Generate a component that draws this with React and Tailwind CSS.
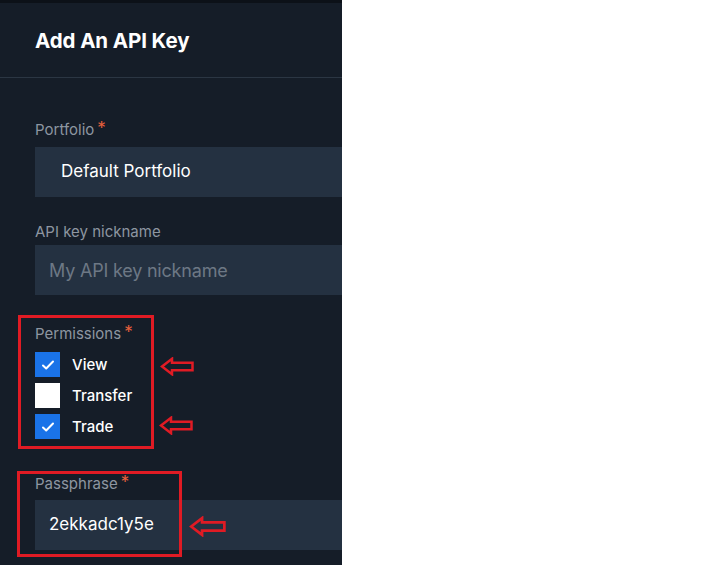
export default function App() {
  const font = { fontFamily: 'Inter, "Noto Sans", sans-serif' };
  const Check = () => (
    <svg width="16" height="16" viewBox="0 0 16 16" fill="none">
      <path d="M3 8.5l3.2 3L13 4.5" stroke="white" strokeWidth="2" strokeLinecap="round" strokeLinejoin="round" />
    </svg>
  );
  const Arrow = ({ w = 34, h = 19 }) => (
    <svg width={w} height={h} viewBox="0 0 34 19" fill="none">
      <path d="M2 9.5L12 1.8V5.8H32.5V13.2H12V17.2Z" stroke="#e01b24" strokeWidth="2.5" strokeLinejoin="miter" />
    </svg>
  );
  return (
    <div className="relative flex w-[726px] h-[565px] overflow-hidden bg-white" style={font}>
      <div className="flex flex-col w-[342px] h-full bg-[#151d28]">
        <div className="h-[3px] bg-[#0c1118]" />
        <div className="h-[75px] flex items-center pl-[35px] border-b border-[#2b3643]">
          <h1 className="text-[20.5px] font-bold text-white tracking-[-0.1px] mt-[3px]">Add An API Key</h1>
        </div>
        <div className="pl-[35px] flex flex-col">
          <div className="mt-[43px] h-[18px] flex items-center text-[15px] text-[#8d96a1]">
            Portfolio<span className="text-[#e8603c] ml-[3px] text-[17px] leading-none self-start mt-[-1px]">*</span>
          </div>
          <div className="mt-[8px] h-[50px] bg-[#243141] flex items-center pl-[26px] text-[17px] text-white">Default Portfolio</div>

          <div className="mt-[26px] h-[18px] flex items-center text-[15px] text-[#8d96a1]">API key nickname</div>
          <div className="mt-[4px] h-[50px] bg-[#243141] flex items-center pl-[14px] text-[18px] text-[#6d7885] tracking-[-0.2px]">My API key nickname</div>

          <div className="mt-[30px] h-[18px] flex items-center text-[15px] text-[#8d96a1]">
            Permissions<span className="text-[#e8603c] ml-[3px] text-[17px] leading-none self-start mt-[-1px]">*</span>
          </div>
          <div className="mt-[9px] flex flex-col gap-[6px]">
            {[
              ['View', true],
              ['Transfer', false],
              ['Trade', true],
            ].map(([l, c]) => (
              <div key={l} className="flex items-center h-[25px]">
                <div className={`w-[25px] h-[25px] flex items-center justify-center ${c ? 'bg-[#1a73e8]' : 'bg-white'}`}>
                  {c && <Check />}
                </div>
                <span className="ml-[12px] mt-[2px] text-[15px] font-medium text-white">{l}</span>
              </div>
            ))}
          </div>

          <div className="mt-[36px] h-[18px] flex items-center text-[15px] text-[#8d96a1]">
            Passphrase<span className="text-[#e8603c] ml-[3px] text-[17px] leading-none self-start mt-[-1px]">*</span>
          </div>
          <div className="mt-[7px] h-[50px] bg-[#243141] flex items-center pl-[14px] text-[17px] text-white">2ekkadc1y5e</div>
        </div>
      </div>

      <div className="absolute left-[18px] top-[315px] w-[136px] h-[134px] border-[3px] border-[#e01b24]" />
      <div className="absolute left-[17px] top-[471px] w-[165px] h-[86px] border-[3px] border-[#e01b24]" />
      <div className="absolute left-[160px] top-[357px]"><Arrow /></div>
      <div className="absolute left-[159px] top-[416px]"><Arrow /></div>
      <div className="absolute left-[189px] top-[516px]"><Arrow w={37} h={21} /></div>
    </div>
  );
}
